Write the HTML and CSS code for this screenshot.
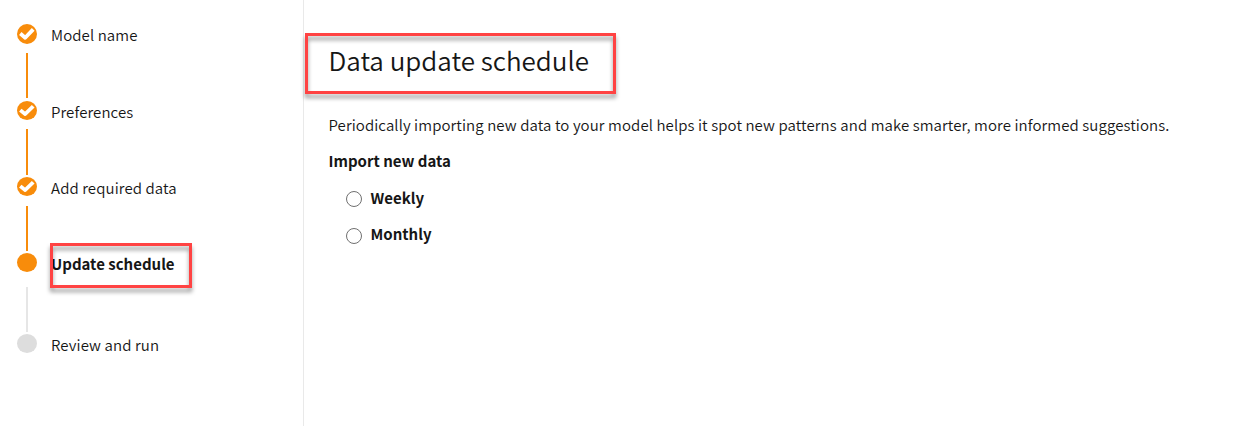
FILE: index.html
```html
<!DOCTYPE html>
<html lang="en">
<head>
<meta charset="utf-8">
<title>Data update schedule</title>
<link rel="stylesheet" href="styles.css">
</head>
<body>
<div class="layout">
  <nav class="sidebar">
    <ol class="steps">
      <li class="step step-first">
        <div class="rail"><svg class="marker" viewBox="0 0 20 20" preserveAspectRatio="none"><circle cx="10" cy="10" r="10"/><path d="M3.3 9.5l4.9 4.2 8-8.3"/></svg><span class="line"></span></div>
        <span class="label">Model name</span>
      </li>
      <li class="step">
        <div class="rail"><svg class="marker" viewBox="0 0 20 20" preserveAspectRatio="none"><circle cx="10" cy="10" r="10"/><path d="M3.3 9.5l4.9 4.2 8-8.3"/></svg><span class="line line-long"></span></div>
        <span class="label">Preferences</span>
      </li>
      <li class="step">
        <div class="rail rail-wide"><svg class="marker" viewBox="0 0 20 20" preserveAspectRatio="none"><circle cx="10" cy="10" r="10"/><path d="M3.3 9.5l4.9 4.2 8-8.3"/></svg><span class="line"></span></div>
        <span class="label">Add required data</span>
      </li>
      <li class="step current">
        <div class="rail"><svg class="marker" viewBox="0 0 20 20" preserveAspectRatio="none"><circle cx="10" cy="10" r="10"/></svg><span class="line"></span></div>
        <span class="label">Update schedule</span>
        <span class="callout callout-step"></span>
      </li>
      <li class="step upcoming">
        <div class="rail"><svg class="marker" viewBox="0 0 20 20" preserveAspectRatio="none"><circle cx="10" cy="10" r="10"/></svg></div>
        <span class="label">Review and run</span>
      </li>
    </ol>
  </nav>
  <main class="content">
    <h1 class="title">Data update schedule<span class="callout callout-title"></span></h1>
    <p class="intro">Periodically importing new data to your model helps it spot new patterns and make smarter, more informed suggestions.</p>
    <h2 class="legend">Import new data</h2>
    <label class="option"><input class="radio" type="radio" name="schedule"><span>Weekly</span></label>
    <label class="option"><input class="radio" type="radio" name="schedule"><span>Monthly</span></label>
  </main>
</div>
</body>
</html>
```
FILE: styles.css
```css
* { box-sizing: border-box; }
body {
  margin: 0;
  background: #fff;
  color: #161616;
  font-family: "Noto Sans CJK SC", "Noto Sans", sans-serif;
  font-size: 15px;
  line-height: 22px;
}
.layout { display: flex; height: 426px; overflow: hidden; }
.sidebar { flex: 0 0 304px; padding: 24px 0 0 17px; border-right: 1px solid #e9e9e9; }
.steps { margin: 0; padding: 0; list-style: none; }
.step { position: relative; display: flex; gap: 14px; height: 76px; font-weight: 350; }
.step-first { height: 77px; }
.rail { display: flex; flex-direction: column; align-items: center; gap: 9px; width: 20px; }
.rail-wide { gap: 10px; }
.marker { display: block; width: 20px; height: 19px; fill: #f88c0b; }
.step-first .marker { height: 20px; }
.marker path { fill: none; stroke: #fff; stroke-width: 3.8; stroke-linejoin: round; }
.line { width: 2px; height: 45px; background: #f88c0b; }
.line-long { height: 46px; }
.label { white-space: nowrap; letter-spacing: 0.1px; }
.current { height: 81px; font-weight: 700; }
.current .label { letter-spacing: 0; }
.current .rail { gap: 15px; }
.current .line { background: #e6e6e6; }
.upcoming .marker { fill: #ddd; }
.callout {
  position: absolute;
  border: 3px solid #ff4343;
  filter: drop-shadow(0 4px 2px rgba(0, 0, 0, .4));
}
.callout-step { left: 33px; top: -10px; width: 142px; height: 45px; }
.content { flex: 1; padding: 41px 0 0 24.5px; }
.title { position: relative; margin: 0; font-size: 26px; font-weight: 350; line-height: 38px; }
.callout-title { left: -23.5px; top: -8px; width: 311px; height: 61px; }
.intro { margin: 35px 0 0; font-weight: 350; letter-spacing: 0.092px; white-space: nowrap; }
.legend { margin: 14px 0 0; font-size: 15px; font-weight: 700; line-height: 22px; }
.option { display: flex; align-items: flex-start; gap: 9px; height: 24px; margin: 12px 0 0 17px; font-weight: 700; }
.legend + .option { margin-top: 15px; }
.radio { appearance: none; width: 16px; height: 16px; margin: 4px 0 0; border: 1px solid #707070; border-radius: 50%; background: #fff; }
.option + .option .radio { margin-top: 5px; }
```
